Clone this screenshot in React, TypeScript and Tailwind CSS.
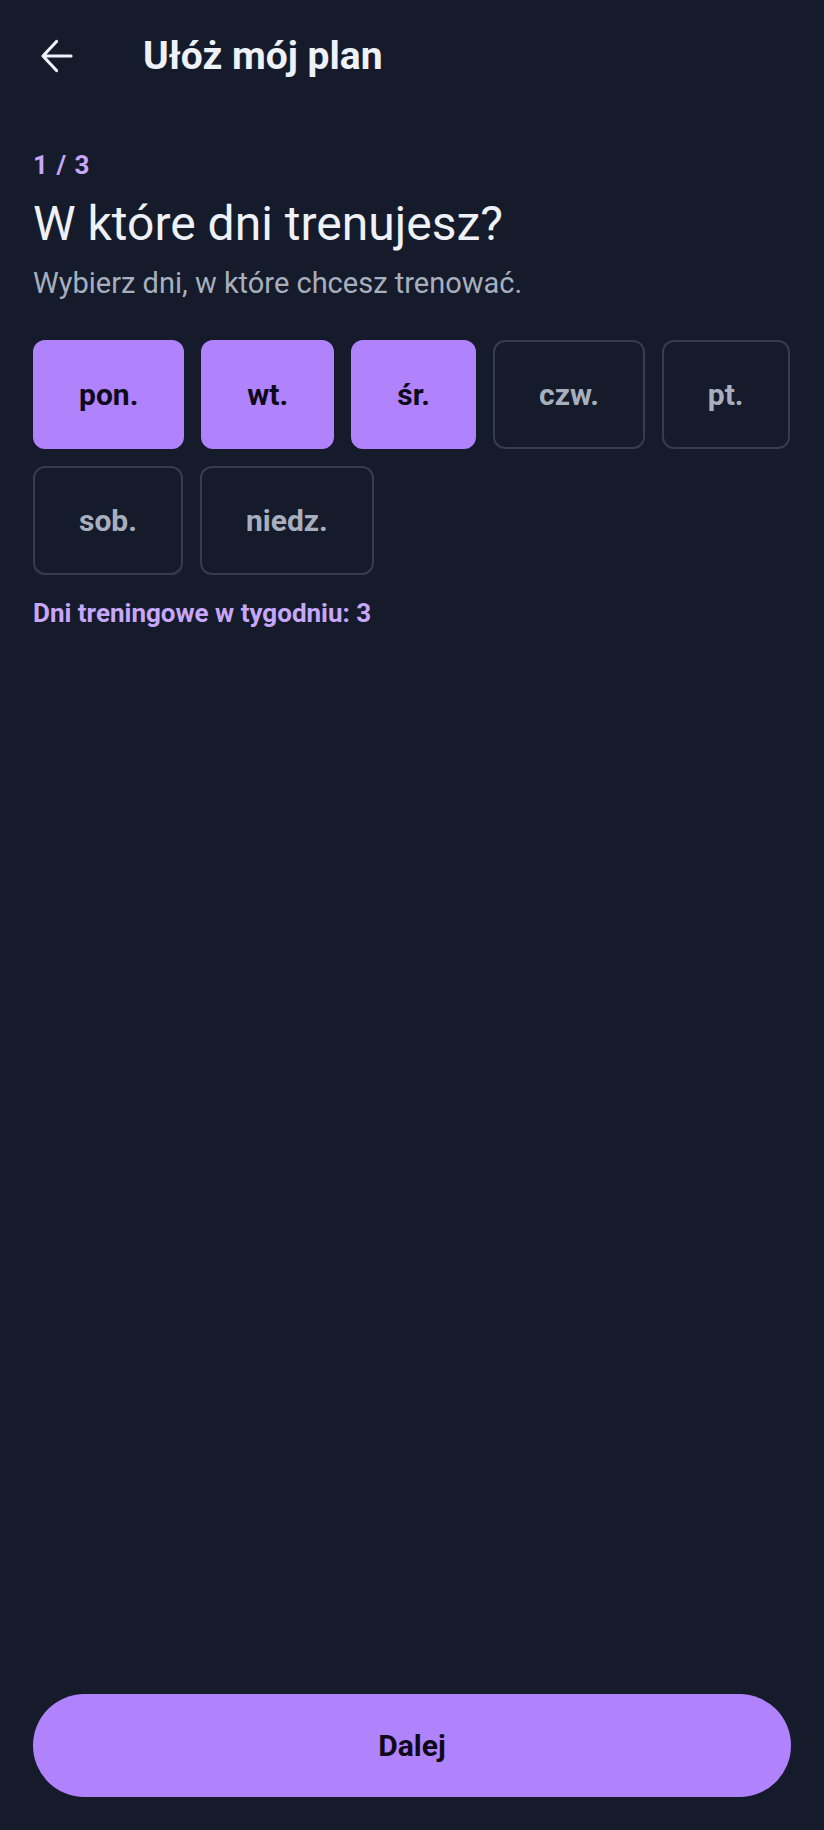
import { useState } from "react";

const DAYS = ["pon.", "wt.", "śr.", "czw.", "pt.", "sob.", "niedz."];

function BackArrow() {
  return (
    <svg viewBox="0 0 40 40" fill="none" className="h-10 w-10" aria-hidden="true">
      <path
        d="M6 20H34M19.5 5.5L6 20L19.5 34.5"
        stroke="#eef1f8"
        strokeWidth="3.2"
        strokeLinecap="round"
        strokeLinejoin="round"
      />
    </svg>
  );
}

export default function App() {
  const [picked, setPicked] = useState<string[]>(["pon.", "wt.", "śr."]);

  const toggle = (d: string) =>
    setPicked((p) => (p.includes(d) ? p.filter((x) => x !== d) : [...p, d]));

  return (
    <div className="flex min-h-[1830px] flex-col bg-[#151b2a] font-['Roboto',sans-serif] text-[#eef1f8]">
      <header className="flex h-[112px] items-center">
        <button className="ml-[37px] flex items-center" aria-label="Wstecz">
          <BackArrow />
        </button>
        <h1 className="ml-[66px] text-[39px] font-bold leading-none">Ułóż mój plan</h1>
      </header>

      <main className="px-[33px] pt-[39px]">
        <p className="text-[26px] font-bold leading-[28px] tracking-[1px] text-[#c7a7fa]">1 / 3</p>
        <h2 className="mt-[17px] text-[48px] leading-[56px]">W które dni trenujesz?</h2>
        <p className="mt-[14px] text-[29px] leading-[34px] text-[#a7afbe]">
          Wybierz dni, w które chcesz trenować.
        </p>

        <div className="mt-[40px] flex flex-wrap gap-[17px]">
          {DAYS.map((d) => {
            const on = picked.includes(d);
            return (
              <button
                key={d}
                onClick={() => toggle(d)}
                className={
                  on
                    ? "flex h-[109px] items-center rounded-xl border-2 border-[#b083fd] bg-[#b083fd] px-[44px] text-[30px] font-bold text-[#0e0a1a]"
                    : "flex h-[109px] items-center rounded-xl border-2 border-[#363c4b] px-[44px] text-[30px] font-bold text-[#a7afbe]"
                }
              >
                {d}
              </button>
            );
          })}
        </div>

        <p className="mt-[23px] text-[26px] font-bold leading-[30px] text-[#c7a7fa]">
          Dni treningowe w tygodniu: {picked.length}
        </p>
      </main>

      <div className="mt-auto px-[33px] pb-[33px]">
        <button className="flex h-[103px] w-full items-center justify-center rounded-full bg-[#b083fd] text-[30px] font-bold text-[#0e0a1a]">
          Dalej
        </button>
      </div>
    </div>
  );
}
